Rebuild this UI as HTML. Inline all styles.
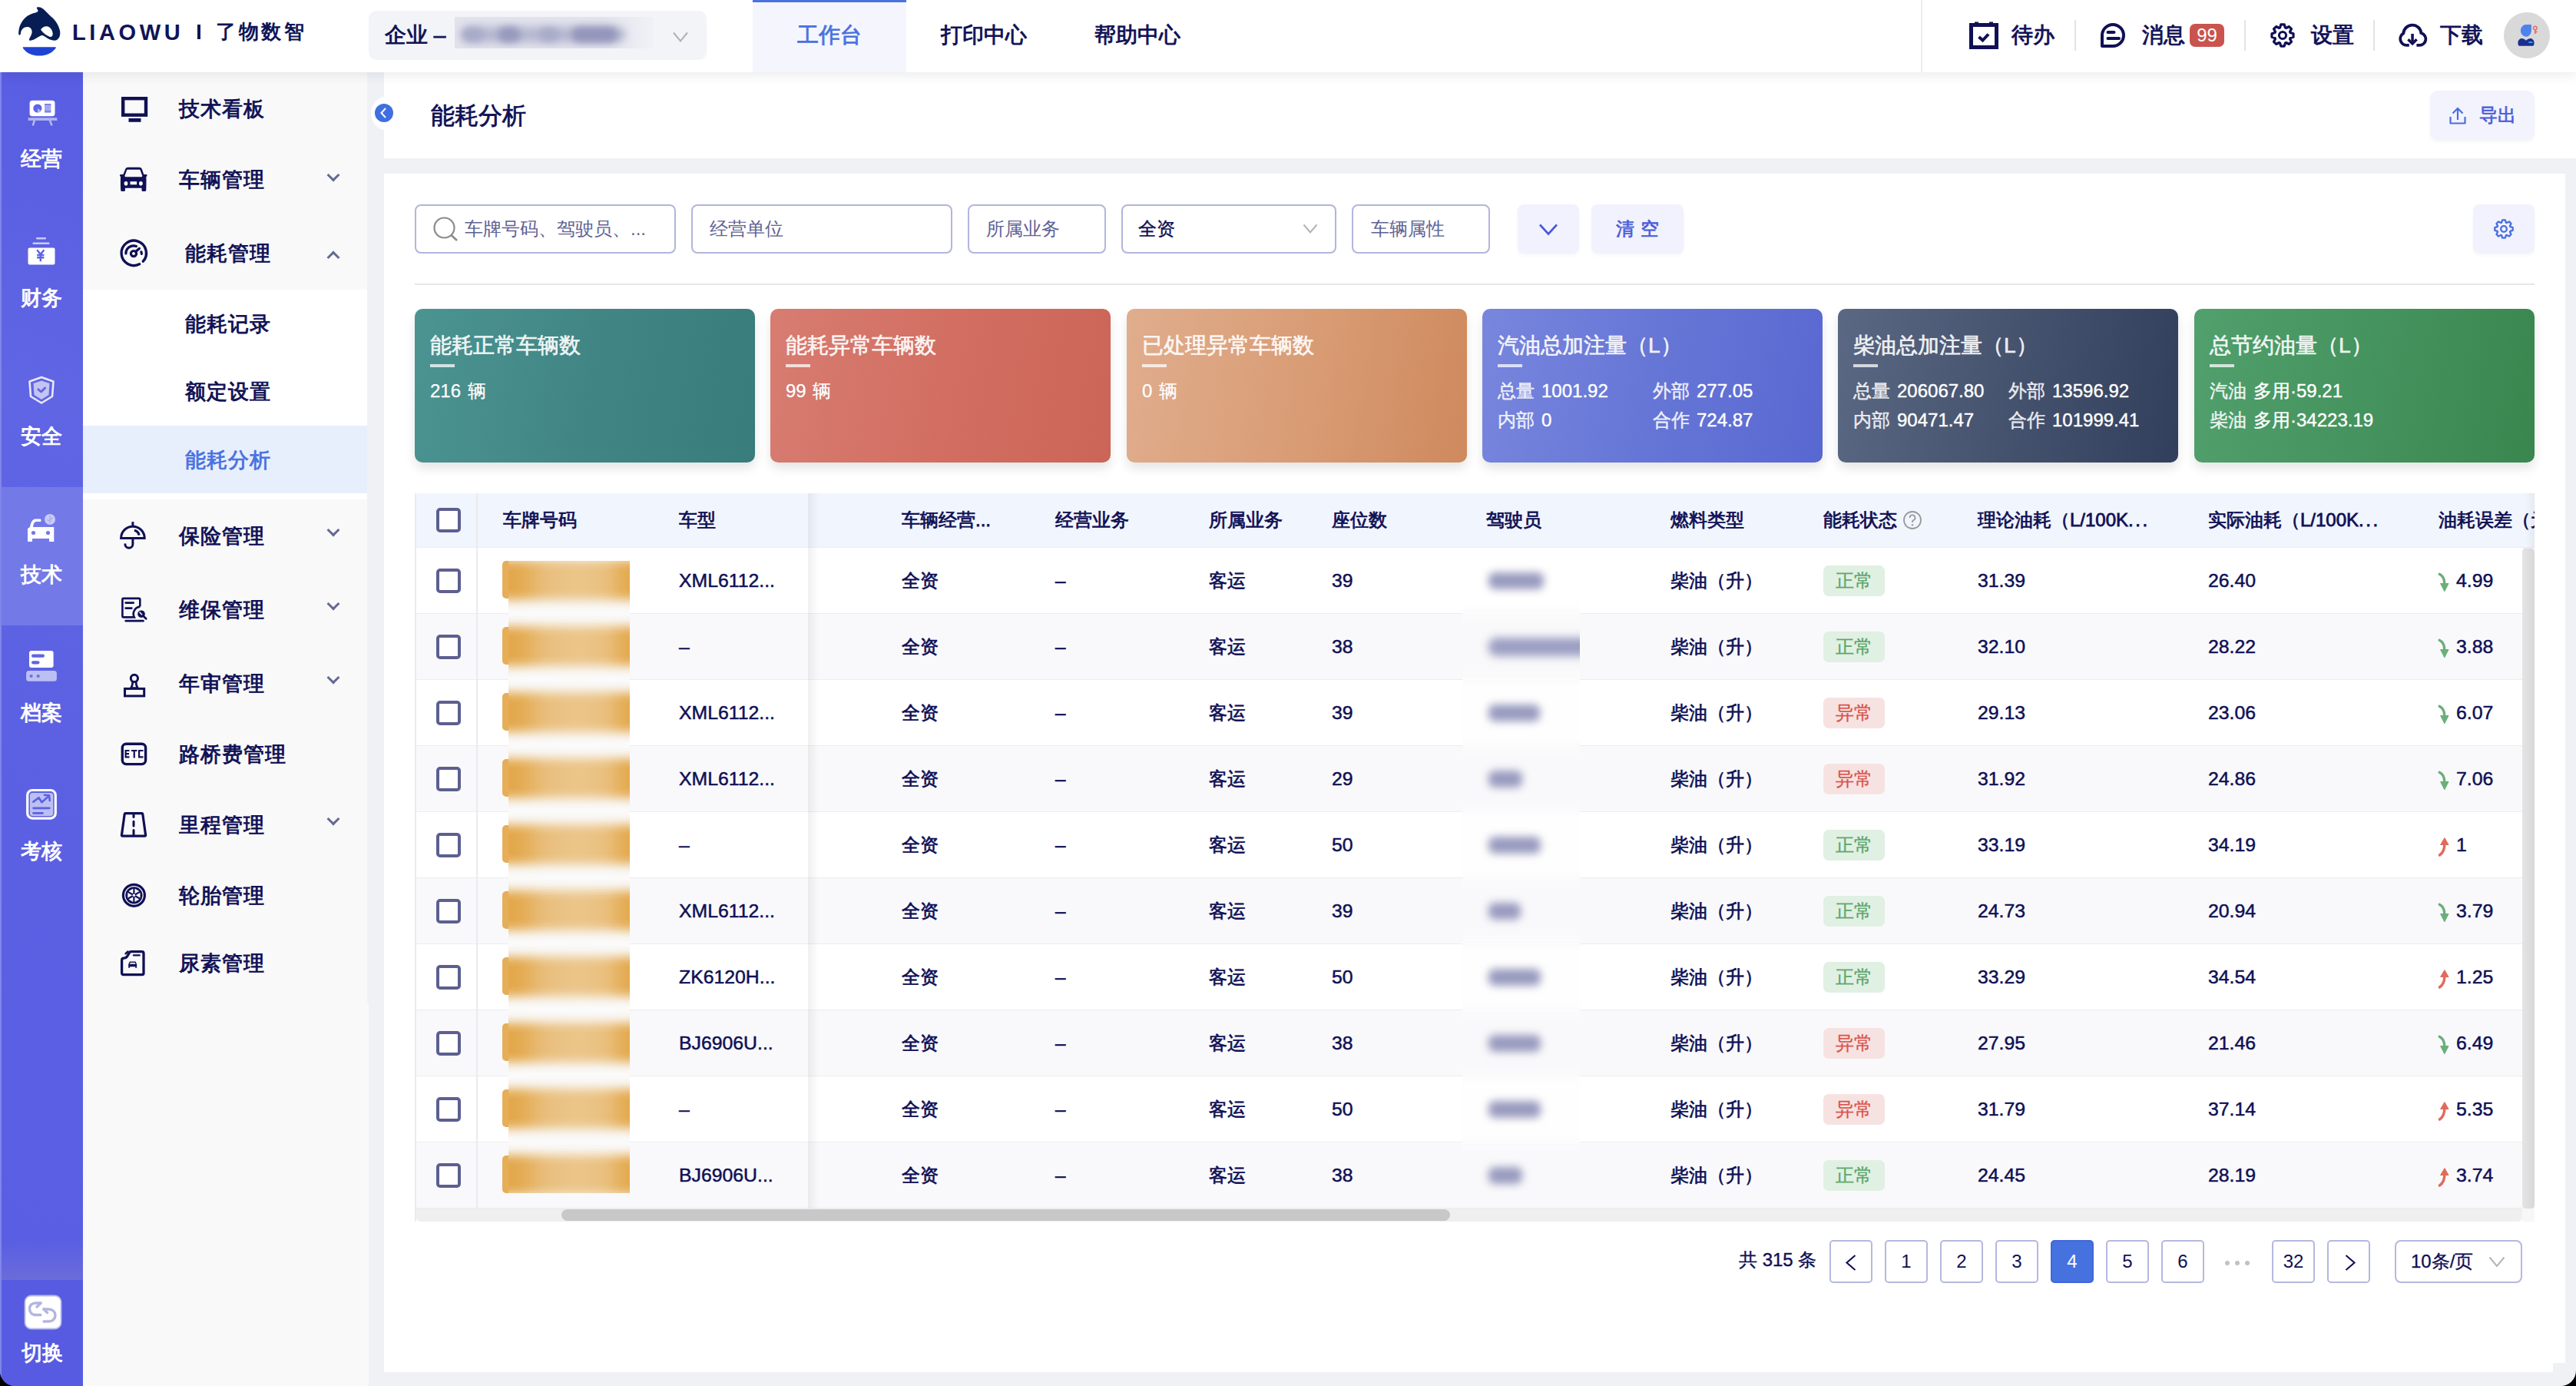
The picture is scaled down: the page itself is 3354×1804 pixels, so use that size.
<!DOCTYPE html>
<html><head><meta charset="utf-8">
<style>
*{box-sizing:border-box;margin:0;padding:0}
html,body{width:3354px;height:1804px;overflow:hidden}
body{position:relative;background:#f0f1f5;font-family:"Liberation Sans",sans-serif;color:#0f1055;}
.a{position:absolute}
.t{position:absolute;white-space:nowrap;line-height:40px;height:40px}
svg{position:absolute;overflow:visible}
#hdr{left:0;top:0;width:3354px;height:94px;background:#fff;box-shadow:0 5px 14px rgba(20,20,60,0.07);z-index:5}
#side{left:0;top:94px;width:108px;height:1710px;background:#5a5ee2;overflow:hidden;border-bottom-left-radius:20px}
#menu{left:108px;top:94px;width:370px;height:1710px;background:#f9f9f9}
#titlebar{left:500px;top:94px;width:2854px;height:112px;background:#fff}
#card{left:500px;top:226px;width:2840px;height:1560px;background:#fff}
.hn{font-size:28px;font-weight:400;color:#0f1055;-webkit-text-stroke:0.9px #0f1055}
.si{color:#fff;font-size:27px;width:108px;text-align:center;left:0;-webkit-text-stroke:0.9px #fff;margin-top:1px}
.mi{font-size:26.5px;letter-spacing:1px;font-weight:400;color:#0f1055;-webkit-text-stroke:0.9px #0f1055}
.chev{position:absolute;width:12px;height:12px;border-right:3px solid #666995;border-bottom:3px solid #666995}
</style></head><body>
<div class="a" style="left:0;top:1774px;width:30px;height:30px;background:#000"></div>
<!-- HEADER -->
<div id="hdr" class="a">
  <svg style="left:0;top:0" width="100" height="94" viewBox="0 0 100 94">
    <path d="M48.1,9.6 C51,8.5 54,9.5 56.8,12 L66,21.2 C71,25 76,31 78,40 C78.8,45 78,50 73,52.6 C69,53 66,52 62,50 C59,48 56,46 54.6,46.1 C52,46.5 46,51 42.7,52.1 C40,53 37.5,53 37.9,51.5 C39,48 41.8,45 41.6,41 C41.4,37 38.5,35 35.7,35 C31,35 27.5,38.5 27,42.9 C26.8,45 26,46 25,45.6 C24,45 24,43 24.3,41 C25,30 33,20 43.3,17.2 C46,16.5 49.5,16 49.5,14 C49.5,12.5 47,11 48.1,9.6 Z" fill="#081d54"/>
    <path d="M53,38.5 C55,35.5 58,34 61.1,34.2 C65,34.5 68.5,39 68.7,44 C68.8,47 67,48.5 65,48 C61,46.5 56,43 53,38.5 Z" fill="#fff"/>
    <path d="M30,61.3 L72.5,61.3 C73,62 72.8,62.5 72,63.5 C67,69.5 60,72.6 51.1,72.6 C42,72.6 35,69.5 30.5,63.5 C29.8,62.5 29.5,62 30,61.3 Z" fill="#1f43d3"/>
  </svg>
  <div class="t" style="left:94px;top:22px;font-size:29px;font-weight:700;letter-spacing:4.6px;color:#101457">LIAOWU</div>
  <div class="a" style="left:257px;top:32px;width:4px;height:19px;background:#101457"></div>
  <div class="t" style="left:281px;top:21px;font-size:26px;font-weight:700;letter-spacing:3.6px;color:#101457">了物数智</div>
  <!-- company select -->
  <div class="a" style="left:480px;top:14px;width:440px;height:64px;background:#f3f4f8;border-radius:10px"></div>
  <div class="t hn" style="left:501px;top:26px;">企业 –</div>
  <div class="a" style="left:592px;top:22px;width:258px;height:41px;overflow:hidden;background:linear-gradient(90deg,#e2e3ec 0%,#e3e4ed 75%,#ebecf2 90%,#f0f1f6 100%)">
    <div class="a" style="left:8px;top:13px;width:215px;height:20px;border-radius:10px;background:#b5b7d0;filter:blur(6px)"></div>
    <div class="a" style="left:10px;top:14px;width:28px;height:18px;border-radius:9px;background:#a8aac8;filter:blur(5px)"></div>
    <div class="a" style="left:56px;top:13px;width:30px;height:20px;border-radius:10px;background:#9799bd;filter:blur(5px)"></div>
    <div class="a" style="left:110px;top:14px;width:26px;height:18px;border-radius:9px;background:#a9abc8;filter:blur(5px)"></div>
    <div class="a" style="left:152px;top:13px;width:60px;height:20px;border-radius:10px;background:#9395bb;filter:blur(5px)"></div>
  </div>
  <svg style="left:875px;top:40px" width="22" height="16" viewBox="0 0 22 16"><path d="M2,2.5 L11,13.5 L20,2.5" fill="none" stroke="#b0b0b8" stroke-width="2"/></svg>
  <!-- nav -->
  <div class="a" style="left:980px;top:0;width:200px;height:94px;background:#f5f6fd;border-top:3px solid #4a72e0"></div>
  <div class="t" style="left:1038px;top:26px;font-size:28px;color:#4a72e0;-webkit-text-stroke:0.9px #4a72e0">工作台</div>
  <div class="t hn" style="left:1225px;top:26px;">打印中心</div>
  <div class="t hn" style="left:1425px;top:26px;">帮助中心</div>
  <div class="a" style="left:2501px;top:0;width:2px;height:94px;background:#ececef"></div>
  <!-- todo -->
  <svg style="left:2562px;top:27px" width="42" height="38" viewBox="0 0 42 38">
    <rect x="4.5" y="5.5" width="33" height="29" fill="none" stroke="#0f1055" stroke-width="5"/>
    <rect x="9" y="1.5" width="5" height="5" fill="#0f1055"/><rect x="28" y="1.5" width="5" height="5" fill="#0f1055"/>
    <path d="M14.5,21 L19.5,25.5 L27,17.5" fill="none" stroke="#0f1055" stroke-width="4"/>
  </svg>
  <div class="t hn" style="left:2619px;top:26px;">待办</div>
  <div class="a" style="left:2701px;top:26px;width:2px;height:40px;background:#e3e3e6"></div>
  <svg style="left:2733px;top:28px" width="36" height="36" viewBox="0 0 36 36">
    <path d="M4,32 L4,18 A14,14 0 1 1 18,32 Z" fill="none" stroke="#0f1055" stroke-width="4" stroke-linejoin="round"/>
    <path d="M11.5,14 L19.5,14 M11.5,22 L26,22" stroke="#0f1055" stroke-width="4" stroke-linecap="round"/>
  </svg>
  <div class="t hn" style="left:2789px;top:26px;">消息</div>
  <div class="a" style="left:2851px;top:31px;width:45px;height:30px;background:#c9544f;border-radius:7px"></div>
  <div class="t" style="left:2851px;top:26px;width:45px;text-align:center;font-size:24px;color:#fff">99</div>
  <div class="a" style="left:2922px;top:26px;width:2px;height:40px;background:#e3e3e6"></div>
  <svg style="left:2954px;top:28px" width="36" height="36" viewBox="0 0 36 36">
    <path d="M14.55,7.98 L15.78,3.97 L20.22,3.97 L21.45,7.98 L22.65,8.47 L26.35,6.51 L29.49,9.65 L27.53,13.35 L28.02,14.55 L32.03,15.78 L32.03,20.22 L28.02,21.45 L27.53,22.65 L29.49,26.35 L26.35,29.49 L22.65,27.53 L21.45,28.02 L20.22,32.03 L15.78,32.03 L14.55,28.02 L13.35,27.53 L9.65,29.49 L6.51,26.35 L8.47,22.65 L7.98,21.45 L3.97,20.22 L3.97,15.78 L7.98,14.55 L8.47,13.35 L6.51,9.65 L9.65,6.51 L13.35,8.47 Z" fill="none" stroke="#0f1055" stroke-width="3.2" stroke-linejoin="round"/>
    <circle cx="18" cy="18" r="4.6" fill="none" stroke="#0f1055" stroke-width="3"/>
  </svg>
  <div class="t hn" style="left:3009px;top:26px;">设置</div>
  <div class="a" style="left:3090px;top:26px;width:2px;height:40px;background:#e3e3e6"></div>
  <svg style="left:3120px;top:28px" width="42" height="36" viewBox="0 0 42 36">
    <path d="M16.8,30.9 L13.5,30.9 A8.4,8.4 0 0 1 9.3,15.3 A11.6,11.6 0 0 1 32.4,15 A8.1,8.1 0 0 1 29.8,30.9 L26.4,30.9" fill="none" stroke="#0f1055" stroke-width="3.8"/>
    <rect x="19.3" y="16" width="3.5" height="10" fill="#0f1055"/>
    <path d="M14.2,24.4 L16.6,22 L21,26.4 L25.4,22 L27.8,24.4 L21,31.2 Z" fill="#0f1055"/>
  </svg>
  <div class="t hn" style="left:3177px;top:26px;">下载</div>
  <div class="a" style="left:3260px;top:16px;width:60px;height:60px;border-radius:50%;background:#d9d9d9"></div>
  <svg style="left:3270px;top:26px" width="44" height="40" viewBox="0 0 44 40">
    <path d="M25.9,5.9 L25.9,14 A7,7.9 0 1 1 18.9,5.9 Z" fill="#4f82ea"/>
    <path d="M8.5,31 C8,27 10,24.5 13,24 C15.5,24 17,25 19,26.7 C21,25 22.5,24 25,24 C28,24.5 30,27 29.5,31 C29.3,33 28.5,33.8 27,33.8 L11,33.8 C9.5,33.8 8.7,33 8.5,31 Z" fill="#1b2f91"/>
    <rect x="22.3" y="28.2" width="5.1" height="1.8" fill="#41a8ef"/>
    <circle cx="30.8" cy="10.5" r="2.3" fill="none" stroke="#ea6a6a" stroke-width="1.5"/>
    <path d="M30.8,12.8 L30.8,17.9" stroke="#ea6a6a" stroke-width="1.7"/>
    <path d="M31.3,13.6 L33.9,15.4 L31.3,17.2 Z" fill="#ea6a6a"/>
  </svg>
</div>
<!-- LEFT SIDEBAR -->
<div id="side" class="a">
  <div class="a" style="left:0;top:0;width:108px;height:1710px;background:linear-gradient(200deg,#585de2 0%,#6065e4 25%,#5c61e3 50%,#5a5fe3 75%,#585de3 100%)"></div>
  <div class="a" style="left:0;top:0;width:2px;height:1710px;background:#8185ea"></div>
  <div class="a" style="left:2px;top:540px;width:106px;height:180px;background:#7479e8"></div>
  <div class="a" style="left:2px;top:1520px;width:106px;height:52px;background:linear-gradient(180deg,rgba(120,120,210,0) 0%,rgba(120,120,210,0.55) 100%)"></div>
  <div class="a" style="left:2px;top:1572px;width:106px;height:138px;background:#565be2"></div>
  <!-- icons: jingying -->
  <svg style="left:35.5px;top:36px" width="42" height="36" viewBox="0 0 42 36">
    <rect x="2.6" y="0.7" width="32.9" height="20.5" rx="3.5" fill="#fff"/>
    <circle cx="12.9" cy="11" r="5.6" fill="#6065e4"/>
    <path d="M12.9,11 L12.9,16.6 A5.6,5.6 0 0 0 17.5,14 Z" fill="#aeb0f0"/>
    <rect x="22" y="5" width="8.4" height="2.6" fill="#7d82e9"/>
    <rect x="22" y="7.6" width="8.4" height="6.4" fill="#a4a7ee"/>
    <rect x="22" y="14" width="8.4" height="2.6" fill="#7d82e9"/>
    <rect x="0.6" y="23.3" width="37.7" height="3.6" fill="#b3b6f1"/>
    <path d="M8.9,26.5 L7,32.5 M28.8,26.5 L31.2,32.5" stroke="#b3b6f1" stroke-width="2.6" stroke-linecap="round"/>
  </svg>
  <div class="t si" style="top:92px;">经营</div>
  <!-- caiwu -->
  <svg style="left:35px;top:214px" width="38" height="38" viewBox="0 0 38 38">
    <rect x="12" y="1" width="13" height="2.6" rx="1" fill="#c8caf4"/>
    <rect x="7.5" y="7.5" width="22" height="2.6" rx="1" fill="#c8caf4"/>
    <rect x="1.5" y="14.5" width="35" height="22" rx="2" fill="#fff"/>
    <path d="M13.2,17.2 L17.8,23 L22.4,17.2 M17.8,23 L17.8,32.2 M13.2,24 L22.4,24 M13.2,27.3 L22.4,27.3" fill="none" stroke="#5f64e4" stroke-width="2.4"/>
  </svg>
  <div class="t si" style="top:273px;">财务</div>
  <!-- anquan -->
  <svg style="left:35px;top:393.5px" width="38" height="40" viewBox="0 0 38 40">
    <path d="M19,3 L34.5,8.5 L33,28 L19,36.5 L5,28 L3.5,8.5 Z" fill="none" stroke="#e8e9fb" stroke-width="2.6" stroke-linejoin="round"/>
    <path d="M19,7.5 L29.5,11 L28.5,26 L19,32 L9.5,26 L8.5,11 Z" fill="#c2c4f2"/>
    <path d="M14.8,18.8 L18.6,22 L23.6,17" fill="none" stroke="#5f64e4" stroke-width="2.8" stroke-linecap="round" stroke-linejoin="round"/>
  </svg>
  <div class="t si" style="top:453px;">安全</div>
  <!-- jishu (active) -->
  <svg style="left:34px;top:574px" width="44" height="42" viewBox="0 0 44 42">
    <path d="M2,37 L2,20 L5,18 C6,12 8,8 12,7.5 L18,7.5 C19,7.5 19.5,8 19.5,9.2 C19.5,10.5 19,11 18,11 L12.5,11 C10.5,11.5 9.5,14 9,18 L36.3,18 L36.3,37 L30,37 L30,33 L8,33 L8,37 Z" fill="#fff"/>
    <circle cx="9.5" cy="25.5" r="2.6" fill="#7479e8"/><circle cx="28.5" cy="25.5" r="2.6" fill="#7479e8"/>
    <circle cx="31" cy="8" r="7" fill="#c9cbf3"/>
    <path d="M27.5,8.5 L30.5,10 L34.5,5.5 M31,3 L31,13" stroke="#a9acef" stroke-width="1.2" fill="none"/>
  </svg>
  <div class="t si" style="top:633px;">技术</div>
  <!-- dangan -->
  <svg style="left:33px;top:752px" width="42" height="42" viewBox="0 0 42 42">
    <rect x="5" y="0.9" width="31.6" height="22.1" rx="3" fill="#fff"/>
    <rect x="8" y="5.6" width="17" height="4.2" rx="2.1" fill="#5f64e4"/>
    <rect x="8" y="14.2" width="10.5" height="4.2" rx="2.1" fill="#5f64e4"/>
    <rect x="1.1" y="27.1" width="39.8" height="13.6" rx="3.5" fill="#bcbff3"/>
    <circle cx="7.6" cy="34" r="2.1" fill="#6a6fe5"/><circle cx="16.7" cy="34" r="2.1" fill="#6a6fe5"/>
  </svg>
  <div class="t si" style="top:813px;">档案</div>
  <!-- kaohe -->
  <svg style="left:33px;top:932px" width="42" height="42" viewBox="0 0 42 42">
    <rect x="2.7" y="2.5" width="36.6" height="36.6" rx="6.5" fill="#5c61e3" stroke="#fff" stroke-width="3.2"/>
    <rect x="5.9" y="5.9" width="30.3" height="30.1" rx="3.5" fill="#bcbff3"/>
    <path d="M10.4,17.6 L17.5,12.2 L21.4,18.2 L30.6,10 M24.9,8.7 L31,9.4 L31.8,16" fill="none" stroke="#5c61e3" stroke-width="2.6" stroke-linecap="round" stroke-linejoin="round"/>
    <path d="M10.6,25.8 L31.3,25.8 M10.6,32.4 L22.5,32.4" stroke="#5c61e3" stroke-width="2.8" stroke-linecap="round"/>
  </svg>
  <div class="t si" style="top:993px;">考核</div>
  <!-- qiehuan -->
  <svg style="left:31px;top:1591px" width="50" height="46" viewBox="0 0 50 46">
    <rect x="1.5" y="1.5" width="47" height="43" rx="8" fill="#fff" stroke="#b9bce8" stroke-width="1.8"/>
    <path d="M22,11 L16,11 C10.5,11 7.5,14 7.5,18.5 C7.5,23 10.5,26.5 16,26.5 L22,26.5" fill="none" stroke="#b3b5e0" stroke-width="3.4" stroke-linecap="round"/>
    <path d="M22,11 L17,16" stroke="#b3b5e0" stroke-width="3.4" stroke-linecap="round"/>
    <path d="M26,19 L32,19 C37.5,19 41,22.5 41,27 C41,31.5 37.5,35 32,35 L26,35" fill="none" stroke="#b3b5e0" stroke-width="3.4" stroke-linecap="round"/>
    <path d="M26,19 L30.5,23.5" stroke="#b3b5e0" stroke-width="3.4" stroke-linecap="round"/>
  </svg>
  <div class="t si" style="top:1646px;left:1px">切换</div>
</div>
<!-- SECONDARY MENU -->
<div class="a" style="left:478px;top:1305px;width:2px;height:499px;background:#f9f9f9"></div>
<div id="menu" class="a">
  <div class="a" style="left:0;top:283px;width:370px;height:273px;background:#fff"></div>
  <div class="a" style="left:0;top:460px;width:370px;height:88px;background:#e8effc"></div>
  <!-- icons (coords relative: x-108, y-94) -->
  <svg style="left:50px;top:32px" width="38" height="38" viewBox="0 0 38 38">
    <rect x="2.2" y="2.2" width="29.8" height="21.5" fill="none" stroke="#0f1055" stroke-width="4.4"/>
    <rect x="9.5" y="28" width="16" height="4.8" fill="#0f1055"/>
  </svg>
  <div class="t mi" style="left:125px;top:28px;">技术看板</div>
  <svg style="left:46px;top:122px" width="40" height="36" viewBox="0 0 40 36">
    <rect x="2" y="11" width="35.5" height="2.9" rx="1.4" fill="#0f1055"/>
    <path d="M13,1.8 L27,1.8 C29,1.8 30.3,2.5 31,4.5 L33.6,12 L36.3,13.5 C36.6,19 36.6,26 36.2,31.5 C36.1,32.6 35.5,33.1 34.3,33.1 L32.2,33.1 C31,33.1 30.5,32.6 30.5,31.5 L30.5,28.8 L8.9,28.8 L8.9,31.5 C8.9,32.6 8.4,33.1 7.2,33.1 L5.1,33.1 C3.9,33.1 3.3,32.6 3.2,31.5 C2.8,26 2.8,19 3.1,13.5 L6,12 L9,4.5 C9.7,2.5 11,1.8 13,1.8 Z" fill="#0f1055"/>
    <path d="M11.4,4.8 L28.3,4.8 L31.2,12.4 C31.5,13.4 30.8,14.2 29.8,14.2 L9.9,14.2 C8.9,14.2 8.2,13.4 8.5,12.4 Z" fill="#f9f9fa"/>
    <ellipse cx="10" cy="22.7" rx="2.4" ry="2.8" fill="#f9f9fa"/><ellipse cx="29.4" cy="22.7" rx="2.4" ry="2.8" fill="#f9f9fa"/>
    <rect x="15.5" y="20.2" width="8.6" height="4.1" fill="#f9f9fa"/>
  </svg>
  <div class="t mi" style="left:125px;top:120px;">车辆管理</div>
  <div class="chev" style="left:320px;top:128px;transform:rotate(45deg)"></div>
  <svg style="left:46px;top:216px" width="40" height="40" viewBox="0 0 40 40">
    <path d="M32.3,30.2 A16.2,16.2 0 1 0 27.6,33.8" fill="none" stroke="#0f1055" stroke-width="3.4" stroke-linecap="round"/>
    <path d="M9.9,19.9 A10,10 0 0 1 23.4,10.5" fill="none" stroke="#0f1055" stroke-width="3.3" stroke-linecap="round"/>
    <circle cx="20" cy="20.1" r="3.6" fill="none" stroke="#0f1055" stroke-width="3.2"/>
    <path d="M22.6,17.6 L27.4,13.4" stroke="#0f1055" stroke-width="3.3" stroke-linecap="round"/>
    <path d="M29.9,17.8 L30.4,20.4" stroke="#0f1055" stroke-width="3.2" stroke-linecap="round"/>
  </svg>
  <div class="t mi" style="left:133px;top:216px;">能耗管理</div>
  <div class="chev" style="left:320px;top:234.5px;transform:rotate(-135deg)"></div>
  <div class="t mi" style="left:133px;top:308px;">能耗记录</div>
  <div class="t mi" style="left:133px;top:396px;">额定设置</div>
  <div class="t mi" style="left:133px;top:485px;color:#4a72e0;-webkit-text-stroke:0.9px #4a72e0">能耗分析</div>
  <!-- baoxian -->
  <svg style="left:46px;top:584px" width="40" height="40" viewBox="0 0 40 40">
    <path d="M3.6,22.5 A15.3,15.3 0 0 1 34.2,22.5 Z" fill="none" stroke="#0f1055" stroke-width="3" stroke-linejoin="miter"/>
    <path d="M18.9,1.2 L18.9,6" stroke="#0f1055" stroke-width="3"/>
    <path d="M20.9,12.3 A8.2,8.2 0 0 1 27.2,18.6" fill="none" stroke="#0f1055" stroke-width="3.2"/>
    <path d="M18.9,22.5 L18.9,30.2 A5,5 0 0 1 8.9,30.2 L8.9,29.4" fill="none" stroke="#0f1055" stroke-width="3"/>
  </svg>
  <div class="t mi" style="left:125px;top:584px;">保险管理</div>
  <div class="chev" style="left:320px;top:590px;transform:rotate(45deg)"></div>
  <!-- weibao -->
  <svg style="left:49px;top:683px" width="40" height="40" viewBox="0 0 40 40">
    <path d="M25.3,12.6 L25.3,3.2 Q25.3,1.9 24,1.9 L3.7,1.9 Q2.4,1.9 2.4,3.2 L2.4,25.1 Q2.4,26.4 3.7,26.4 L17.8,26.4 A9.5,9.5 0 0 1 25.3,12.6" fill="none" stroke="#0f1055" stroke-width="2.6"/>
    <circle cx="27" cy="22.2" r="4.8" fill="#0f1055"/>
    <path d="M25,20 L27.6,22.7" stroke="#f9f9fa" stroke-width="1.6" stroke-linecap="round"/>
    <path d="M30.3,25.5 L33.2,28.3" stroke="#0f1055" stroke-width="2.8" stroke-linecap="round"/>
    <path d="M6.6,7.6 L16.8,7.6 M6.6,14.6 L14.4,14.6" stroke="#0f1055" stroke-width="2.6" stroke-linecap="round"/>
    <path d="M6.8,31.2 L29.4,31.2" stroke="#0f1055" stroke-width="2.8" stroke-linecap="round"/>
  </svg>
  <div class="t mi" style="left:125px;top:680px;">维保管理</div>
  <div class="chev" style="left:320px;top:686px;transform:rotate(45deg)"></div>
  <!-- nianshen -->
  <svg style="left:47.5px;top:781.5px" width="40" height="40" viewBox="0 0 40 40">
    <circle cx="18.9" cy="6.9" r="4.6" fill="none" stroke="#0f1055" stroke-width="3"/>
    <path d="M16.6,11 C16.8,14 16.3,17 14.5,19.5 L23.3,19.5 C21.5,17 21,14 21.2,11" fill="none" stroke="#0f1055" stroke-width="2.6"/>
    <rect x="6.5" y="20.4" width="25.2" height="9.5" fill="none" stroke="#0f1055" stroke-width="3"/>
  </svg>
  <div class="t mi" style="left:125px;top:776px;">年审管理</div>
  <div class="chev" style="left:320px;top:782px;transform:rotate(45deg)"></div>
  <!-- etc -->
  <svg style="left:47.5px;top:869px" width="40" height="40" viewBox="0 0 40 40">
    <rect x="3.3" y="5.2" width="30.3" height="26.4" rx="5" fill="none" stroke="#0f1055" stroke-width="3.4"/>
    <path d="M12.5,14 L7.6,14 L7.6,22.3 L12.5,22.3 M7.6,18.1 L12,18.1 M15,14 L22.5,14 M18.75,14 L18.75,23.4 M30.5,14 L25.1,14 L25.1,22.3 L30.5,22.3" fill="none" stroke="#0f1055" stroke-width="2.2"/>
  </svg>
  <div class="t mi" style="left:125px;top:868px;">路桥费管理</div>
  <!-- licheng -->
  <svg style="left:47.5px;top:962px" width="40" height="40" viewBox="0 0 40 40">
    <path d="M6.2,3.6 Q6.4,2.6 7.4,2.6 L28.6,2.6 Q29.6,2.6 29.8,3.6 L33.6,31 Q33.7,32.2 32.5,32.2 L3.5,32.2 Q2.3,32.2 2.4,31 Z" fill="none" stroke="#0f1055" stroke-width="3.2" stroke-linejoin="round"/>
    <path d="M18,3.8 L18,7.5 M18,13.2 L18,19 M18,24.6 L18,31" stroke="#0f1055" stroke-width="3" stroke-linecap="round"/>
  </svg>
  <div class="t mi" style="left:125px;top:960px;">里程管理</div>
  <div class="chev" style="left:320px;top:966px;transform:rotate(45deg)"></div>
  <!-- luntai -->
  <svg style="left:47.5px;top:1052px" width="40" height="40" viewBox="0 0 40 40">
    <circle cx="18.4" cy="19.3" r="14" fill="none" stroke="#0f1055" stroke-width="3.2"/>
    <circle cx="18.4" cy="19.3" r="11.1" fill="#0f1055"/>
    <path d="M21.20,19.30 L26.24,16.29 L26.24,22.31 Z M19.80,21.72 L24.93,24.59 L19.71,27.60 Z M17.00,21.72 L17.09,27.60 L11.87,24.59 Z M15.60,19.30 L10.56,22.31 L10.56,16.29 Z M17.00,16.88 L11.87,14.01 L17.09,11.00 Z M19.80,16.88 L19.71,11.00 L24.93,14.01 Z" fill="#f9f9fa" stroke="#f9f9fa" stroke-width="0.5" stroke-linejoin="round"/>
    <circle cx="18.4" cy="19.3" r="1.8" fill="#f9f9fa"/>
  </svg>
  <div class="t mi" style="left:125px;top:1052px;">轮胎管理</div>
  <!-- niaosu -->
  <svg style="left:46px;top:1140px" width="40" height="40" viewBox="0 0 40 40">
    <path d="M16.2,4.7 L30.8,4.7 Q33,4.7 33,7 L33,32.4 Q33,34.6 30.8,34.6 L6.8,34.6 Q4.6,34.6 4.6,32.4 L4.6,15.8 Q4.6,13.2 7.3,13.2 Q10,13.2 11.5,11 L13.8,7.2 Q15,4.7 16.2,4.7 Z" fill="none" stroke="#0f1055" stroke-width="3.3" stroke-linejoin="round"/>
    <path d="M9.6,7.2 L12.6,4.6" stroke="#0f1055" stroke-width="2.6" stroke-linecap="round"/>
    <path d="M19.8,9.3 L27.8,9.3" stroke="#0f1055" stroke-width="2.2" stroke-linecap="round"/>
    <path d="M13.2,25.8 L13.2,21 L14.8,17.6 L22.5,17.6 L24.1,21 L24.1,25.8 L22.2,25.8 L22.2,24.2 L15.1,24.2 L15.1,25.8 Z" fill="#0f1055"/>
    <path d="M15.6,18.8 L21.7,18.8 L22.6,21 L14.7,21 Z" fill="#f9f9fa" opacity="0.8"/>
  </svg>
  <div class="t mi" style="left:125px;top:1140px;">尿素管理</div>
</div>
<!-- TITLE BAR -->
<div id="titlebar" class="a">
  <div class="t" style="left:61px;top:37px;font-size:31px;color:#0f1055;-webkit-text-stroke:0.8px #0f1055">能耗分析</div>
  <div class="a" style="left:2664px;top:24px;width:136px;height:64px;background:#f2f3fd;border-radius:10px;box-shadow:0 3px 5px rgba(0,0,0,0.04)"></div>
  <svg style="left:2689px;top:45px" width="24" height="24" viewBox="0 0 24 24">
    <path d="M11,17 L11,2 M4.5,8.5 L11,2 L17.5,8.5" fill="none" stroke="#4a6ee0" stroke-width="2.2"/>
    <path d="M1.5,13 L1.5,21.5 L20.5,21.5 L20.5,13" fill="none" stroke="#4a6ee0" stroke-width="2.2" stroke-linejoin="round"/>
  </svg>
  <div class="t" style="left:2728px;top:36px;font-size:24px;color:#4b5ed9;-webkit-text-stroke:0.7px #4b5ed9">导出</div>
</div>
<div class="a" style="left:483px;top:125px;width:44px;height:45px;border-radius:50%;background:#fff"></div>
<div class="a" style="left:488px;top:135px;width:24px;height:24px;border-radius:50%;background:#3f6fe0"></div>
<svg style="left:492px;top:139px" width="16" height="16" viewBox="0 0 16 16"><path d="M10,2 L4.5,8 L10,14" fill="none" stroke="#fff" stroke-width="2"/></svg>

<!-- MAIN CARD -->
<div id="card" class="a"></div>
<!-- filters -->
<div class="a" style="left:540px;top:266px;width:340px;height:64px;border:2px solid #b2b5dc;border-radius:8px"></div>
<svg style="left:562px;top:281px" width="36" height="36" viewBox="0 0 36 36"><circle cx="16.5" cy="15.5" r="13" fill="none" stroke="#8a8a8a" stroke-width="2.2"/><path d="M25.5,25 L33,32" stroke="#8a8a8a" stroke-width="2.6"/></svg>
<div class="t" style="left:605px;top:278px;font-size:24px;color:#5f6394">车牌号码、驾驶员、...</div>
<div class="a" style="left:900px;top:266px;width:340px;height:64px;border:2px solid #b2b5dc;border-radius:8px"></div>
<div class="t" style="left:924px;top:278px;font-size:24px;color:#5f6394">经营单位</div>
<div class="a" style="left:1260px;top:266px;width:180px;height:64px;border:2px solid #b2b5dc;border-radius:8px"></div>
<div class="t" style="left:1284px;top:278px;font-size:24px;color:#5f6394">所属业务</div>
<div class="a" style="left:1460px;top:266px;width:280px;height:64px;border:2px solid #b2b5dc;border-radius:8px"></div>
<div class="t" style="left:1482px;top:278px;font-size:24px;color:#0f1055;-webkit-text-stroke:0.4px #0f1055">全资</div>
<svg style="left:1696px;top:291px" width="20" height="14" viewBox="0 0 20 14"><path d="M1.5,1.5 L10,11.5 L18.5,1.5" fill="none" stroke="#b4b4b4" stroke-width="2"/></svg>
<div class="a" style="left:1760px;top:266px;width:180px;height:64px;border:2px solid #b2b5dc;border-radius:8px"></div>
<div class="t" style="left:1785px;top:278px;font-size:24px;color:#5f6394">车辆属性</div>
<div class="a" style="left:1976px;top:266px;width:80px;height:64px;background:#f1f2fd;border-radius:8px;box-shadow:0 3px 4px rgba(0,0,0,0.03)"></div>
<svg style="left:2003px;top:290px" width="26" height="18" viewBox="0 0 26 18"><path d="M2,2.5 L13,14.5 L24,2.5" fill="none" stroke="#4a57d8" stroke-width="2.6"/></svg>
<div class="a" style="left:2072px;top:266px;width:120px;height:64px;background:#f1f2fd;border-radius:8px;box-shadow:0 3px 4px rgba(0,0,0,0.03)"></div>
<div class="t" style="left:2104px;top:278px;font-size:24px;color:#4b5ed9;letter-spacing:8px;-webkit-text-stroke:0.7px #4b5ed9">清空</div>
<div class="a" style="left:3220px;top:266px;width:80px;height:64px;background:#f1f2fd;border-radius:8px;box-shadow:0 3px 4px rgba(0,0,0,0.03)"></div>
<svg style="left:3245px;top:283px" width="30" height="30" viewBox="0 0 36 36">
  <path d="M14.55,7.98 L15.78,3.97 L20.22,3.97 L21.45,7.98 L22.65,8.47 L26.35,6.51 L29.49,9.65 L27.53,13.35 L28.02,14.55 L32.03,15.78 L32.03,20.22 L28.02,21.45 L27.53,22.65 L29.49,26.35 L26.35,29.49 L22.65,27.53 L21.45,28.02 L20.22,32.03 L15.78,32.03 L14.55,28.02 L13.35,27.53 L9.65,29.49 L6.51,26.35 L8.47,22.65 L7.98,21.45 L3.97,20.22 L3.97,15.78 L7.98,14.55 L8.47,13.35 L6.51,9.65 L9.65,6.51 L13.35,8.47 Z" fill="none" stroke="#4a6ee0" stroke-width="2.8" stroke-linejoin="round"/>
  <circle cx="18" cy="18" r="4.6" fill="none" stroke="#4a6ee0" stroke-width="2.8"/>
</svg>
<div class="a" style="left:540px;top:369px;width:2760px;height:2px;background:#e6e6ea"></div>
<!-- stat cards -->
<style>
.sc{position:absolute;top:402px;width:443px;height:200px;border-radius:10px;box-shadow:0 8px 14px rgba(0,0,0,0.10)}
.sct{position:absolute;left:20px;top:28px;font-size:28px;line-height:40px;color:rgba(255,255,255,0.88);white-space:nowrap;-webkit-text-stroke:0.7px rgba(255,255,255,0.88)}
.scb{position:absolute;left:20px;top:72px;width:32px;height:4px;background:rgba(255,255,255,0.75)}
.scv{position:absolute;left:20px;top:92px;font-size:24px;line-height:30px;color:#fff;white-space:nowrap;-webkit-text-stroke:0.25px #fff;word-spacing:2px}
.scr{position:absolute;font-size:24px;line-height:30px;color:#fff;white-space:nowrap;-webkit-text-stroke:0.4px #fff}
.scr span{color:rgba(255,255,255,0.85);margin-right:9px}
</style>
<div class="sc" style="left:540px;background:linear-gradient(100deg,#4b9492 0%,#418685 50%,#387c7b 100%)">
  <div class="sct">能耗正常车辆数</div><div class="scb"></div><div class="scv">216 辆</div></div>
<div class="sc" style="left:1003px;background:linear-gradient(100deg,#d87c71 0%,#d26f62 50%,#cb6557 100%)">
  <div class="sct">能耗异常车辆数</div><div class="scb"></div><div class="scv">99 辆</div></div>
<div class="sc" style="left:1467px;background:linear-gradient(100deg,#e0ad8d 0%,#d99d76 50%,#cf895d 100%)">
  <div class="sct">已处理异常车辆数</div><div class="scb"></div><div class="scv">0 辆</div></div>
<div class="sc" style="left:1930px;background:linear-gradient(100deg,#7886dd 0%,#6676d6 50%,#5868d1 100%)">
  <div class="sct">汽油总加注量（L）</div><div class="scb"></div>
  <div class="scr" style="left:20px;top:92px"><span>总量</span>1001.92</div>
  <div class="scr" style="left:222px;top:92px"><span>外部</span>277.05</div>
  <div class="scr" style="left:20px;top:130px"><span>内部</span>0</div>
  <div class="scr" style="left:222px;top:130px"><span>合作</span>724.87</div></div>
<div class="sc" style="left:2393px;background:linear-gradient(100deg,#5a6883 0%,#46536f 50%,#323f5c 100%)">
  <div class="sct">柴油总加注量（L）</div><div class="scb"></div>
  <div class="scr" style="left:20px;top:92px"><span>总量</span>206067.80</div>
  <div class="scr" style="left:222px;top:92px"><span>外部</span>13596.92</div>
  <div class="scr" style="left:20px;top:130px"><span>内部</span>90471.47</div>
  <div class="scr" style="left:222px;top:130px"><span>合作</span>101999.41</div></div>
<div class="sc" style="left:2857px;background:linear-gradient(100deg,#51a06d 0%,#45935e 50%,#3a864f 100%)">
  <div class="sct">总节约油量（L）</div><div class="scb"></div>
  <div class="scr" style="left:20px;top:92px"><span>汽油</span>多用·59.21</div>
  <div class="scr" style="left:20px;top:130px"><span>柴油</span>多用·34223.19</div></div>
<!-- TABLE -->
<style>
.td{position:absolute;white-space:nowrap;font-size:24px;line-height:30px;color:#0f1055;-webkit-text-stroke:0.7px #0f1055}
.n{font-size:24.8px;-webkit-text-stroke:0.5px #0f1055}
.th{position:absolute;white-space:nowrap;font-size:24px;line-height:30px;color:#0f1055;-webkit-text-stroke:0.8px #0f1055;top:662px}
.cb{position:absolute;left:568px;width:32px;height:32px;border:4px solid #5c5f8f;border-radius:5px;background:#fff}
.tag{position:absolute;left:2374px;width:80px;height:40px;border-radius:7px;font-size:24px;line-height:40px;text-align:center;-webkit-text-stroke:0.3px currentColor}
.ok{background:#e0f0e3;color:#5aa66b}
.bad{background:#f7e2e2;color:#d9544a}
</style>
<div class="a" style="left:540px;top:642px;width:2760px;height:948px;background:#fff;border-left:2px solid #ebebef"></div>
<div class="a" style="left:542px;top:642px;width:2758px;height:72px;background:#f1f5fd;border-bottom:2px solid #ededee"></div>

<div class="a" style="left:542px;top:713.0px;width:2742px;height:86.5px;background:#ffffff;border-bottom:2px solid #ededee"></div>
<div class="a" style="left:542px;top:799.0px;width:2742px;height:86.5px;background:#f9f9fb;border-bottom:2px solid #ededee"></div>
<div class="a" style="left:542px;top:885.0px;width:2742px;height:86.5px;background:#ffffff;border-bottom:2px solid #ededee"></div>
<div class="a" style="left:542px;top:971.0px;width:2742px;height:86.5px;background:#f9f9fb;border-bottom:2px solid #ededee"></div>
<div class="a" style="left:542px;top:1057.0px;width:2742px;height:86.5px;background:#ffffff;border-bottom:2px solid #ededee"></div>
<div class="a" style="left:542px;top:1143.0px;width:2742px;height:86.5px;background:#f9f9fb;border-bottom:2px solid #ededee"></div>
<div class="a" style="left:542px;top:1229.0px;width:2742px;height:86.5px;background:#ffffff;border-bottom:2px solid #ededee"></div>
<div class="a" style="left:542px;top:1315.0px;width:2742px;height:86.5px;background:#f9f9fb;border-bottom:2px solid #ededee"></div>
<div class="a" style="left:542px;top:1401.0px;width:2742px;height:86.5px;background:#ffffff;border-bottom:2px solid #ededee"></div>
<div class="a" style="left:542px;top:1487.0px;width:2742px;height:86.5px;background:#f9f9fb;border-bottom:2px solid #ededee"></div>
<div class="a" style="left:1904px;top:785px;width:153px;height:770px;overflow:hidden;background:#fcfcfd"><div class="a" style="left:-10px;top:-66.0px;width:173px;height:74.0px;background:#fefefe;filter:blur(5px)"></div><div class="a" style="left:-10px;top:20.0px;width:173px;height:74.0px;background:#f9f9fb;filter:blur(5px)"></div><div class="a" style="left:-10px;top:106.0px;width:173px;height:74.0px;background:#fefefe;filter:blur(5px)"></div><div class="a" style="left:-10px;top:192.0px;width:173px;height:74.0px;background:#f9f9fb;filter:blur(5px)"></div><div class="a" style="left:-10px;top:278.0px;width:173px;height:74.0px;background:#fefefe;filter:blur(5px)"></div><div class="a" style="left:-10px;top:364.0px;width:173px;height:74.0px;background:#f9f9fb;filter:blur(5px)"></div><div class="a" style="left:-10px;top:450.0px;width:173px;height:74.0px;background:#fefefe;filter:blur(5px)"></div><div class="a" style="left:-10px;top:536.0px;width:173px;height:74.0px;background:#f9f9fb;filter:blur(5px)"></div><div class="a" style="left:-10px;top:622.0px;width:173px;height:74.0px;background:#fefefe;filter:blur(5px)"></div><div class="a" style="left:-10px;top:708.0px;width:173px;height:74.0px;background:#f9f9fb;filter:blur(5px)"></div></div>
<div class="a" style="left:620px;top:642px;width:2px;height:931px;background:#ebebef"></div>
<div class="a" style="left:1052px;top:642px;width:14px;height:931px;background:linear-gradient(90deg,rgba(0,0,0,0.06),rgba(0,0,0,0))"></div>
<div class="th" style="left:655px;">车牌号码</div>
<div class="th" style="left:884px;">车型</div>
<div class="th" style="left:1174px;">车辆经营...</div>
<div class="th" style="left:1374px;">经营业务</div>
<div class="th" style="left:1574px;">所属业务</div>
<div class="th" style="left:1734px;">座位数</div>
<div class="th" style="left:1935px;">驾驶员</div>
<div class="th" style="left:2175px;">燃料类型</div>
<div class="th" style="left:2374px;">能耗状态</div>
<div class="th" style="left:2575px;">理论油耗（L/100K<span style="letter-spacing:2.5px">...</span></div>
<div class="th" style="left:2875px;">实际油耗（L/100K<span style="letter-spacing:2.5px">...</span></div>
<div class="th" style="left:3175px;width:125px;overflow:hidden;">油耗误差（元</div>
<div class="cb" style="top:661px"></div>
<svg style="left:2477px;top:664px" width="26" height="26" viewBox="0 0 26 26"><circle cx="13" cy="13" r="11" fill="none" stroke="#9a9a9a" stroke-width="1.8"/><path d="M9.5,10 A3.5,3.5 0 1 1 14,13.3 L13,14.3 L13,16" fill="none" stroke="#9a9a9a" stroke-width="1.8"/><circle cx="13" cy="19.3" r="1.2" fill="#9a9a9a"/></svg>
<div class="a" style="left:3288px;top:642px;width:12px;height:71px;background:linear-gradient(90deg,rgba(0,0,0,0),rgba(0,0,0,0.05))"></div>
<div class="a" style="left:654px;top:730.0px;width:14px;height:49px;border-radius:5px;background:#e6ae58"></div>
<div class="a" style="left:654px;top:816.0px;width:14px;height:49px;border-radius:5px;background:#e6ae58"></div>
<div class="a" style="left:654px;top:902.0px;width:14px;height:49px;border-radius:5px;background:#e6ae58"></div>
<div class="a" style="left:654px;top:988.0px;width:14px;height:49px;border-radius:5px;background:#e6ae58"></div>
<div class="a" style="left:654px;top:1074.0px;width:14px;height:49px;border-radius:5px;background:#e6ae58"></div>
<div class="a" style="left:654px;top:1160.0px;width:14px;height:49px;border-radius:5px;background:#e6ae58"></div>
<div class="a" style="left:654px;top:1246.0px;width:14px;height:49px;border-radius:5px;background:#e6ae58"></div>
<div class="a" style="left:654px;top:1332.0px;width:14px;height:49px;border-radius:5px;background:#e6ae58"></div>
<div class="a" style="left:654px;top:1418.0px;width:14px;height:49px;border-radius:5px;background:#e6ae58"></div>
<div class="a" style="left:654px;top:1504.0px;width:14px;height:49px;border-radius:5px;background:#e6ae58"></div>
<div class="a" style="left:662px;top:730px;width:158px;height:823.0px;overflow:hidden;background:#fafafa">
<div class="a" style="left:-30px;top:-1.0px;width:218px;height:52px;background:linear-gradient(90deg,#e3a84c 0%,#e3a84c 19%,#e9bf7e 36%,#ebc58a 55%,#eac07f 72%,#e4aa50 84%,#e3a84c 100%);filter:blur(7px)"></div>
<div class="a" style="left:-30px;top:85.0px;width:218px;height:52px;background:linear-gradient(90deg,#e3a84c 0%,#e3a84c 19%,#e9bf7e 36%,#ebc58a 55%,#eac07f 72%,#e4aa50 84%,#e3a84c 100%);filter:blur(7px)"></div>
<div class="a" style="left:-30px;top:171.0px;width:218px;height:52px;background:linear-gradient(90deg,#e3a84c 0%,#e3a84c 19%,#e9bf7e 36%,#ebc58a 55%,#eac07f 72%,#e4aa50 84%,#e3a84c 100%);filter:blur(7px)"></div>
<div class="a" style="left:-30px;top:257.0px;width:218px;height:52px;background:linear-gradient(90deg,#e3a84c 0%,#e3a84c 19%,#e9bf7e 36%,#ebc58a 55%,#eac07f 72%,#e4aa50 84%,#e3a84c 100%);filter:blur(7px)"></div>
<div class="a" style="left:-30px;top:343.0px;width:218px;height:52px;background:linear-gradient(90deg,#e3a84c 0%,#e3a84c 19%,#e9bf7e 36%,#ebc58a 55%,#eac07f 72%,#e4aa50 84%,#e3a84c 100%);filter:blur(7px)"></div>
<div class="a" style="left:-30px;top:429.0px;width:218px;height:52px;background:linear-gradient(90deg,#e3a84c 0%,#e3a84c 19%,#e9bf7e 36%,#ebc58a 55%,#eac07f 72%,#e4aa50 84%,#e3a84c 100%);filter:blur(7px)"></div>
<div class="a" style="left:-30px;top:515.0px;width:218px;height:52px;background:linear-gradient(90deg,#e3a84c 0%,#e3a84c 19%,#e9bf7e 36%,#ebc58a 55%,#eac07f 72%,#e4aa50 84%,#e3a84c 100%);filter:blur(7px)"></div>
<div class="a" style="left:-30px;top:601.0px;width:218px;height:52px;background:linear-gradient(90deg,#e3a84c 0%,#e3a84c 19%,#e9bf7e 36%,#ebc58a 55%,#eac07f 72%,#e4aa50 84%,#e3a84c 100%);filter:blur(7px)"></div>
<div class="a" style="left:-30px;top:687.0px;width:218px;height:52px;background:linear-gradient(90deg,#e3a84c 0%,#e3a84c 19%,#e9bf7e 36%,#ebc58a 55%,#eac07f 72%,#e4aa50 84%,#e3a84c 100%);filter:blur(7px)"></div>
<div class="a" style="left:-30px;top:773.0px;width:218px;height:52px;background:linear-gradient(90deg,#e3a84c 0%,#e3a84c 19%,#e9bf7e 36%,#ebc58a 55%,#eac07f 72%,#e4aa50 84%,#e3a84c 100%);filter:blur(7px)"></div>
</div>
<div class="cb" style="top:740.0px"></div>
<div class="td n" style="left:884px;top:741.0px">XML6112...</div>
<div class="td" style="left:1174px;top:741.0px">全资</div>
<div class="td" style="left:1374px;top:741.0px">–</div>
<div class="td" style="left:1574px;top:741.0px">客运</div>
<div class="td n" style="left:1734px;top:741.0px">39</div>
<div class="a" style="left:1938px;top:745.0px;width:72px;height:22px;border-radius:8px;background:#999bbf;filter:blur(5.5px)"></div>
<div class="td" style="left:2175px;top:741.0px">柴油（升）</div>
<div class="tag ok" style="top:736.0px">正常</div>
<div class="td n" style="left:2575px;top:741.0px">31.39</div>
<div class="td n" style="left:2875px;top:741.0px">26.40</div>
<svg style="left:3174px;top:745.0px" width="16" height="27" viewBox="0 0 16 27"><path d="M2.2,2.2 C6,4 8.8,8 8.8,15" fill="none" stroke="#6aaf7a" stroke-width="3.4" stroke-linecap="round"/><path d="M3.6,14.5 L14,14.5 L8.8,24.8 Z" fill="#6aaf7a" stroke="#6aaf7a" stroke-width="1" stroke-linejoin="round"/></svg>
<div class="td n" style="left:3198px;top:741.0px">4.99</div>
<div class="cb" style="top:826.0px"></div>
<div class="td n" style="left:884px;top:827.0px">–</div>
<div class="td" style="left:1174px;top:827.0px">全资</div>
<div class="td" style="left:1374px;top:827.0px">–</div>
<div class="td" style="left:1574px;top:827.0px">客运</div>
<div class="td n" style="left:1734px;top:827.0px">38</div>
<div class="a" style="left:1904px;top:817.0px;width:153px;height:50px;overflow:hidden"><div class="a" style="left:34px;top:13px;width:150px;height:24px;border-radius:10px;background:#9c9ec2;filter:blur(6px)"></div></div>
<div class="td" style="left:2175px;top:827.0px">柴油（升）</div>
<div class="tag ok" style="top:822.0px">正常</div>
<div class="td n" style="left:2575px;top:827.0px">32.10</div>
<div class="td n" style="left:2875px;top:827.0px">28.22</div>
<svg style="left:3174px;top:831.0px" width="16" height="27" viewBox="0 0 16 27"><path d="M2.2,2.2 C6,4 8.8,8 8.8,15" fill="none" stroke="#6aaf7a" stroke-width="3.4" stroke-linecap="round"/><path d="M3.6,14.5 L14,14.5 L8.8,24.8 Z" fill="#6aaf7a" stroke="#6aaf7a" stroke-width="1" stroke-linejoin="round"/></svg>
<div class="td n" style="left:3198px;top:827.0px">3.88</div>
<div class="cb" style="top:912.0px"></div>
<div class="td n" style="left:884px;top:913.0px">XML6112...</div>
<div class="td" style="left:1174px;top:913.0px">全资</div>
<div class="td" style="left:1374px;top:913.0px">–</div>
<div class="td" style="left:1574px;top:913.0px">客运</div>
<div class="td n" style="left:1734px;top:913.0px">39</div>
<div class="a" style="left:1938px;top:917.0px;width:67px;height:22px;border-radius:8px;background:#999bbf;filter:blur(5.5px)"></div>
<div class="td" style="left:2175px;top:913.0px">柴油（升）</div>
<div class="tag bad" style="top:908.0px">异常</div>
<div class="td n" style="left:2575px;top:913.0px">29.13</div>
<div class="td n" style="left:2875px;top:913.0px">23.06</div>
<svg style="left:3174px;top:917.0px" width="16" height="27" viewBox="0 0 16 27"><path d="M2.2,2.2 C6,4 8.8,8 8.8,15" fill="none" stroke="#6aaf7a" stroke-width="3.4" stroke-linecap="round"/><path d="M3.6,14.5 L14,14.5 L8.8,24.8 Z" fill="#6aaf7a" stroke="#6aaf7a" stroke-width="1" stroke-linejoin="round"/></svg>
<div class="td n" style="left:3198px;top:913.0px">6.07</div>
<div class="cb" style="top:998.0px"></div>
<div class="td n" style="left:884px;top:999.0px">XML6112...</div>
<div class="td" style="left:1174px;top:999.0px">全资</div>
<div class="td" style="left:1374px;top:999.0px">–</div>
<div class="td" style="left:1574px;top:999.0px">客运</div>
<div class="td n" style="left:1734px;top:999.0px">29</div>
<div class="a" style="left:1938px;top:1003.0px;width:44px;height:22px;border-radius:8px;background:#999bbf;filter:blur(5.5px)"></div>
<div class="td" style="left:2175px;top:999.0px">柴油（升）</div>
<div class="tag bad" style="top:994.0px">异常</div>
<div class="td n" style="left:2575px;top:999.0px">31.92</div>
<div class="td n" style="left:2875px;top:999.0px">24.86</div>
<svg style="left:3174px;top:1003.0px" width="16" height="27" viewBox="0 0 16 27"><path d="M2.2,2.2 C6,4 8.8,8 8.8,15" fill="none" stroke="#6aaf7a" stroke-width="3.4" stroke-linecap="round"/><path d="M3.6,14.5 L14,14.5 L8.8,24.8 Z" fill="#6aaf7a" stroke="#6aaf7a" stroke-width="1" stroke-linejoin="round"/></svg>
<div class="td n" style="left:3198px;top:999.0px">7.06</div>
<div class="cb" style="top:1084.0px"></div>
<div class="td n" style="left:884px;top:1085.0px">–</div>
<div class="td" style="left:1174px;top:1085.0px">全资</div>
<div class="td" style="left:1374px;top:1085.0px">–</div>
<div class="td" style="left:1574px;top:1085.0px">客运</div>
<div class="td n" style="left:1734px;top:1085.0px">50</div>
<div class="a" style="left:1938px;top:1089.0px;width:68px;height:22px;border-radius:8px;background:#999bbf;filter:blur(5.5px)"></div>
<div class="td" style="left:2175px;top:1085.0px">柴油（升）</div>
<div class="tag ok" style="top:1080.0px">正常</div>
<div class="td n" style="left:2575px;top:1085.0px">33.19</div>
<div class="td n" style="left:2875px;top:1085.0px">34.19</div>
<svg style="left:3174px;top:1088.0px" width="16" height="27" viewBox="0 0 16 27"><path d="M8.9,10 C9,17 7,22 2.4,25" fill="none" stroke="#e06b5c" stroke-width="3.4" stroke-linecap="round"/><path d="M3.6,11.5 L14,11.5 L8.9,2.6 Z" fill="#e06b5c" stroke="#e06b5c" stroke-width="1" stroke-linejoin="round"/></svg>
<div class="td n" style="left:3198px;top:1085.0px">1</div>
<div class="cb" style="top:1170.0px"></div>
<div class="td n" style="left:884px;top:1171.0px">XML6112...</div>
<div class="td" style="left:1174px;top:1171.0px">全资</div>
<div class="td" style="left:1374px;top:1171.0px">–</div>
<div class="td" style="left:1574px;top:1171.0px">客运</div>
<div class="td n" style="left:1734px;top:1171.0px">39</div>
<div class="a" style="left:1938px;top:1175.0px;width:42px;height:22px;border-radius:8px;background:#999bbf;filter:blur(5.5px)"></div>
<div class="td" style="left:2175px;top:1171.0px">柴油（升）</div>
<div class="tag ok" style="top:1166.0px">正常</div>
<div class="td n" style="left:2575px;top:1171.0px">24.73</div>
<div class="td n" style="left:2875px;top:1171.0px">20.94</div>
<svg style="left:3174px;top:1175.0px" width="16" height="27" viewBox="0 0 16 27"><path d="M2.2,2.2 C6,4 8.8,8 8.8,15" fill="none" stroke="#6aaf7a" stroke-width="3.4" stroke-linecap="round"/><path d="M3.6,14.5 L14,14.5 L8.8,24.8 Z" fill="#6aaf7a" stroke="#6aaf7a" stroke-width="1" stroke-linejoin="round"/></svg>
<div class="td n" style="left:3198px;top:1171.0px">3.79</div>
<div class="cb" style="top:1256.0px"></div>
<div class="td n" style="left:884px;top:1257.0px">ZK6120H...</div>
<div class="td" style="left:1174px;top:1257.0px">全资</div>
<div class="td" style="left:1374px;top:1257.0px">–</div>
<div class="td" style="left:1574px;top:1257.0px">客运</div>
<div class="td n" style="left:1734px;top:1257.0px">50</div>
<div class="a" style="left:1938px;top:1261.0px;width:68px;height:22px;border-radius:8px;background:#999bbf;filter:blur(5.5px)"></div>
<div class="td" style="left:2175px;top:1257.0px">柴油（升）</div>
<div class="tag ok" style="top:1252.0px">正常</div>
<div class="td n" style="left:2575px;top:1257.0px">33.29</div>
<div class="td n" style="left:2875px;top:1257.0px">34.54</div>
<svg style="left:3174px;top:1260.0px" width="16" height="27" viewBox="0 0 16 27"><path d="M8.9,10 C9,17 7,22 2.4,25" fill="none" stroke="#e06b5c" stroke-width="3.4" stroke-linecap="round"/><path d="M3.6,11.5 L14,11.5 L8.9,2.6 Z" fill="#e06b5c" stroke="#e06b5c" stroke-width="1" stroke-linejoin="round"/></svg>
<div class="td n" style="left:3198px;top:1257.0px">1.25</div>
<div class="cb" style="top:1342.0px"></div>
<div class="td n" style="left:884px;top:1343.0px">BJ6906U...</div>
<div class="td" style="left:1174px;top:1343.0px">全资</div>
<div class="td" style="left:1374px;top:1343.0px">–</div>
<div class="td" style="left:1574px;top:1343.0px">客运</div>
<div class="td n" style="left:1734px;top:1343.0px">38</div>
<div class="a" style="left:1938px;top:1347.0px;width:68px;height:22px;border-radius:8px;background:#999bbf;filter:blur(5.5px)"></div>
<div class="td" style="left:2175px;top:1343.0px">柴油（升）</div>
<div class="tag bad" style="top:1338.0px">异常</div>
<div class="td n" style="left:2575px;top:1343.0px">27.95</div>
<div class="td n" style="left:2875px;top:1343.0px">21.46</div>
<svg style="left:3174px;top:1347.0px" width="16" height="27" viewBox="0 0 16 27"><path d="M2.2,2.2 C6,4 8.8,8 8.8,15" fill="none" stroke="#6aaf7a" stroke-width="3.4" stroke-linecap="round"/><path d="M3.6,14.5 L14,14.5 L8.8,24.8 Z" fill="#6aaf7a" stroke="#6aaf7a" stroke-width="1" stroke-linejoin="round"/></svg>
<div class="td n" style="left:3198px;top:1343.0px">6.49</div>
<div class="cb" style="top:1428.0px"></div>
<div class="td n" style="left:884px;top:1429.0px">–</div>
<div class="td" style="left:1174px;top:1429.0px">全资</div>
<div class="td" style="left:1374px;top:1429.0px">–</div>
<div class="td" style="left:1574px;top:1429.0px">客运</div>
<div class="td n" style="left:1734px;top:1429.0px">50</div>
<div class="a" style="left:1938px;top:1433.0px;width:68px;height:22px;border-radius:8px;background:#999bbf;filter:blur(5.5px)"></div>
<div class="td" style="left:2175px;top:1429.0px">柴油（升）</div>
<div class="tag bad" style="top:1424.0px">异常</div>
<div class="td n" style="left:2575px;top:1429.0px">31.79</div>
<div class="td n" style="left:2875px;top:1429.0px">37.14</div>
<svg style="left:3174px;top:1432.0px" width="16" height="27" viewBox="0 0 16 27"><path d="M8.9,10 C9,17 7,22 2.4,25" fill="none" stroke="#e06b5c" stroke-width="3.4" stroke-linecap="round"/><path d="M3.6,11.5 L14,11.5 L8.9,2.6 Z" fill="#e06b5c" stroke="#e06b5c" stroke-width="1" stroke-linejoin="round"/></svg>
<div class="td n" style="left:3198px;top:1429.0px">5.35</div>
<div class="cb" style="top:1514.0px"></div>
<div class="td n" style="left:884px;top:1515.0px">BJ6906U...</div>
<div class="td" style="left:1174px;top:1515.0px">全资</div>
<div class="td" style="left:1374px;top:1515.0px">–</div>
<div class="td" style="left:1574px;top:1515.0px">客运</div>
<div class="td n" style="left:1734px;top:1515.0px">38</div>
<div class="a" style="left:1938px;top:1519.0px;width:44px;height:22px;border-radius:8px;background:#999bbf;filter:blur(5.5px)"></div>
<div class="td" style="left:2175px;top:1515.0px">柴油（升）</div>
<div class="tag ok" style="top:1510.0px">正常</div>
<div class="td n" style="left:2575px;top:1515.0px">24.45</div>
<div class="td n" style="left:2875px;top:1515.0px">28.19</div>
<svg style="left:3174px;top:1518.0px" width="16" height="27" viewBox="0 0 16 27"><path d="M8.9,10 C9,17 7,22 2.4,25" fill="none" stroke="#e06b5c" stroke-width="3.4" stroke-linecap="round"/><path d="M3.6,11.5 L14,11.5 L8.9,2.6 Z" fill="#e06b5c" stroke="#e06b5c" stroke-width="1" stroke-linejoin="round"/></svg>
<div class="td n" style="left:3198px;top:1515.0px">3.74</div>
<div class="a" style="left:3284px;top:714px;width:16px;height:859.0px;border-radius:4px;background:linear-gradient(90deg,#e4e4e4,#d8d8d8)"></div>
<div class="a" style="left:542px;top:1573px;width:2742px;height:17px;background:#efefef;border-bottom-left-radius:6px;border-bottom-right-radius:6px"></div>
<div class="a" style="left:731px;top:1574px;width:1157px;height:15px;border-radius:8px;background:#c8c8c8"></div>
<div class="a" style="left:3284px;top:1573px;width:16px;height:17px;background:#f7f7f7"></div>
<!-- PAGINATION -->
<style>
.pb{position:absolute;top:1614px;width:56px;height:56px;border:2px solid #b5b8de;border-radius:5px;font-size:24px;line-height:52px;text-align:center;color:#0f1055;background:#fff}
</style>
<div class="td" style="left:2264px;top:1625px;-webkit-text-stroke:0.4px #0f1055">共 315 条</div>
<div class="pb" style="left:2382px"><svg style="left:18px;top:16px" width="20" height="24" viewBox="0 0 20 24"><path d="M13.5,2 L2.5,11.5 L13.5,21" fill="none" stroke="#0f1055" stroke-width="2.1"/></svg></div>
<div class="pb" style="left:2454px">1</div>
<div class="pb" style="left:2526px">2</div>
<div class="pb" style="left:2598px">3</div>
<div class="pb" style="left:2670px;background:#4672e0;border-color:#3e68d8;color:#fff">4</div>
<div class="pb" style="left:2742px">5</div>
<div class="pb" style="left:2814px">6</div>
<div class="a" style="left:2897px;top:1641px;width:6px;height:6px;border-radius:50%;background:#c0c0c8"></div>
<div class="a" style="left:2910px;top:1641px;width:6px;height:6px;border-radius:50%;background:#c0c0c8"></div>
<div class="a" style="left:2923px;top:1641px;width:6px;height:6px;border-radius:50%;background:#c0c0c8"></div>
<div class="pb" style="left:2958px">32</div>
<div class="pb" style="left:3030px"><svg style="left:18px;top:16px" width="20" height="24" viewBox="0 0 20 24"><path d="M4.5,2 L15.5,11.5 L4.5,21" fill="none" stroke="#0f1055" stroke-width="2.1"/></svg></div>
<div class="a" style="left:3118px;top:1614px;width:166px;height:56px;border:2px solid #b5b8de;border-radius:8px;background:#fff"></div>
<div class="td" style="left:3139px;top:1627px;-webkit-text-stroke:0.3px #0f1055">10条/页</div>
<svg style="left:3240px;top:1635px" width="22" height="16" viewBox="0 0 22 16"><path d="M1.5,1.5 L11,13 L20.5,1.5" fill="none" stroke="#b4b4b4" stroke-width="2"/></svg>

<div class="a" style="left:3324px;top:1774px;width:30px;height:30px;background:#000"><div class="a" style="left:0;top:0;width:30px;height:30px;background:#f0f1f5;border-bottom-right-radius:20px"></div></div>
</body></html>
